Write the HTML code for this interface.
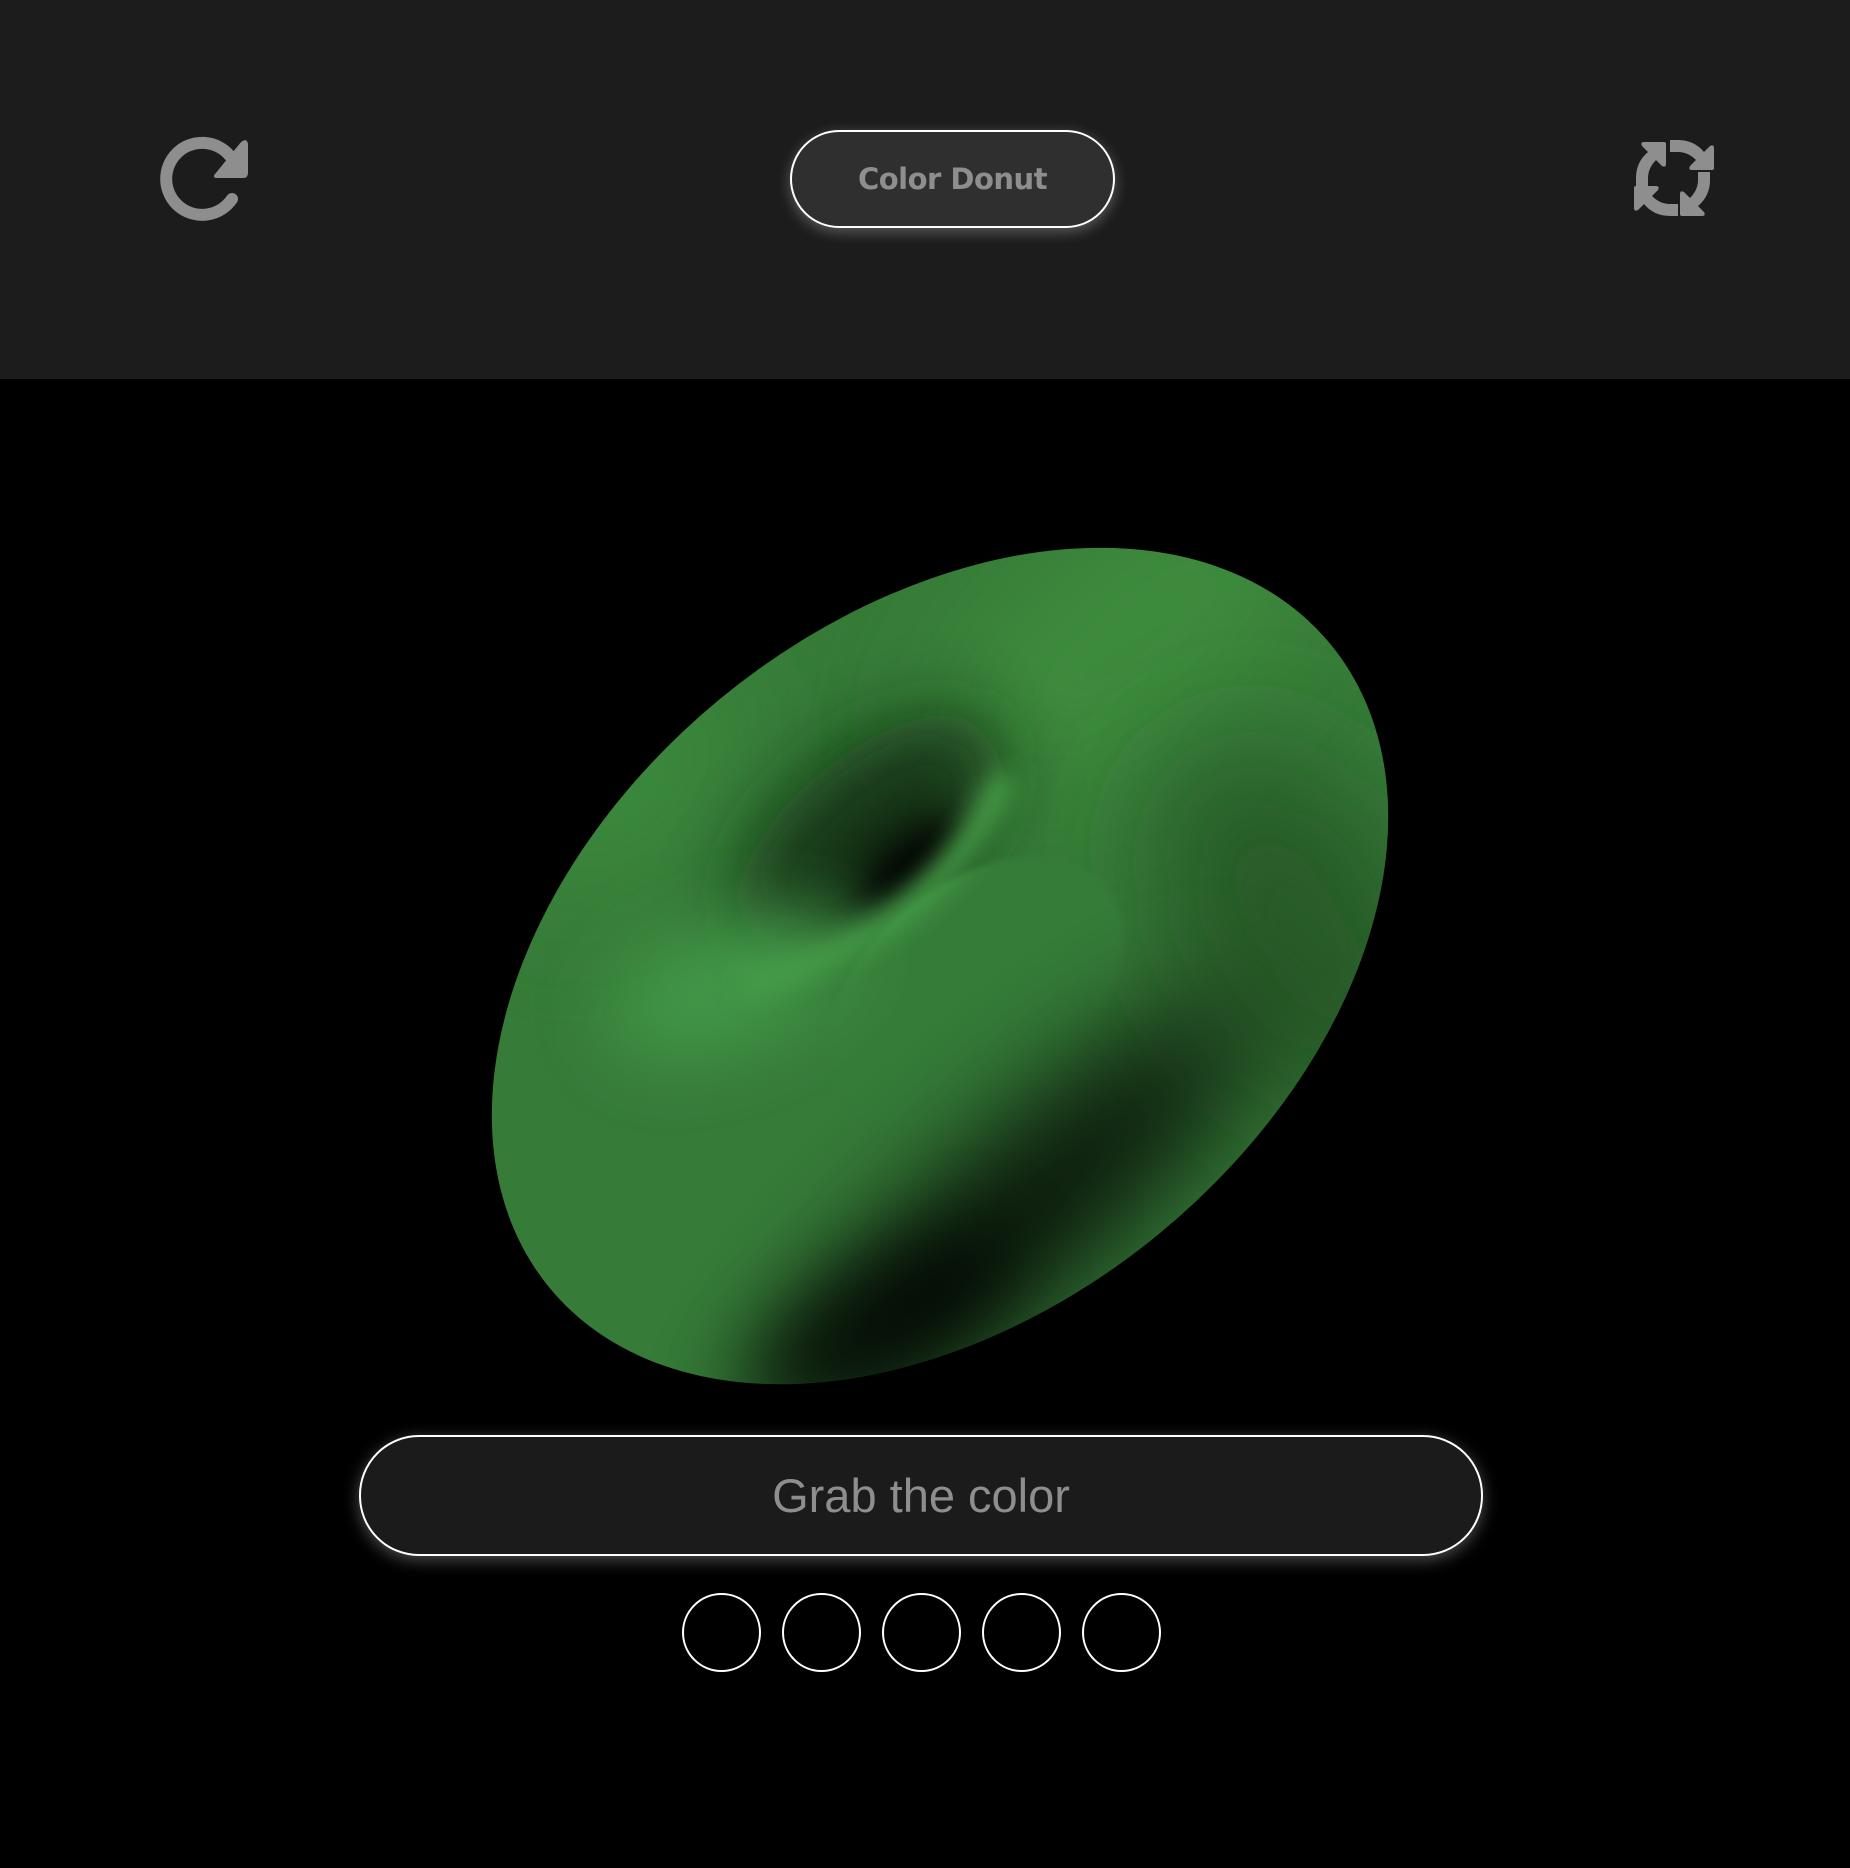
<!DOCTYPE html>
<html><head><meta charset="utf-8"><style>
html,body{margin:0;padding:0;background:#000;width:1850px;height:1868px;overflow:hidden;font-family:"Liberation Sans",sans-serif}
.hdr{position:absolute;left:0;top:0;width:1850px;height:379px;background:#1c1c1c}
.pill{position:absolute;left:790px;top:130px;width:321px;height:94px;border:2px solid #fff;border-radius:49px;background:#2f2f2f;box-shadow:0 4px 14px rgba(255,255,255,0.28);color:#8e8e8e;font-family:"DejaVu Sans","Liberation Sans",sans-serif;font-weight:bold;font-size:29px;line-height:94px;text-align:center;letter-spacing:-0.5px}
.btn{position:absolute;left:359px;top:1435px;width:1120px;height:117px;border:2px solid #fff;border-radius:60px;background:#1b1b1b;box-shadow:0 4px 16px rgba(255,255,255,0.3);color:#8e8e8e;font-size:47px;line-height:117px;text-align:center}
.c{position:absolute;top:1593px;width:75px;height:75px;border:2px solid #fff;border-radius:50%}
</style></head><body>
<div class="hdr">
<svg style="position:absolute;left:150px;top:130px" width="110" height="100" viewBox="0 0 110 100">
<path d="M82 69 A36 36 0 1 1 80 26" fill="none" stroke="#8e8e8e" stroke-width="12" stroke-linecap="round"/>
<path d="M66 46 L93 46 Q96 46 96 43 L96 15 Q96 10 92 14 Z" fill="#8e8e8e" stroke="#8e8e8e" stroke-width="4" stroke-linejoin="round"/>
</svg>
<svg style="position:absolute;left:1630px;top:134px" width="86" height="86" viewBox="0 0 86 86">
<g fill="#8e8e8e">
<path d="M6 52 L6 44 Q6 28 18 18 L12 12 Q10 8 14 8 L34 8 Q36 8 36 10 L36 30 Q36 34 32 32 L26 26 Q18 34 18 44 L18 52 Z"/>
<path d="M46 6 L54 6 Q70 6 80 18 L86 12 Q90 10 90 14 L90 34 Q90 36 88 36 L68 36 Q64 36 66 32 L72 26 Q64 18 54 18 L46 18 Z" transform="translate(-6 0)"/>
<path d="M80 34 L80 42 Q80 58 68 68 L74 74 Q76 78 72 78 L52 78 Q50 78 50 76 L50 56 Q50 52 54 54 L60 60 Q68 52 68 42 L68 34 Z" transform="translate(0 4)"/>
<path d="M40 82 L32 82 Q16 82 6 70 L0 76 Q-4 78 -4 74 L-4 54 Q-4 52 -2 52 L18 52 Q22 52 20 56 L14 62 Q22 70 32 70 L40 70 Z" transform="translate(8 0)"/>
</g></svg>
<div class="pill">Color Donut</div>
</div>
<svg style="position:absolute;left:0;top:379px" width="1850" height="1060" viewBox="0 379 1850 1060">
<defs>
<clipPath id="cp"><ellipse cx="940" cy="966" rx="506" ry="346" transform="rotate(-39.5 940 966)"/></clipPath>
<filter id="b60" filterUnits="userSpaceOnUse" x="0" y="300" width="1850" height="1300"><feGaussianBlur stdDeviation="60"/></filter>
<filter id="b40" filterUnits="userSpaceOnUse" x="0" y="300" width="1850" height="1300"><feGaussianBlur stdDeviation="38"/></filter>
<filter id="b20" filterUnits="userSpaceOnUse" x="0" y="300" width="1850" height="1300"><feGaussianBlur stdDeviation="20"/></filter>
<filter id="b12" filterUnits="userSpaceOnUse" x="0" y="300" width="1850" height="1300"><feGaussianBlur stdDeviation="12"/></filter>
<filter id="b3" filterUnits="userSpaceOnUse" x="0" y="300" width="1850" height="1300"><feGaussianBlur stdDeviation="3"/></filter>
</defs>
<g clip-path="url(#cp)">
<rect x="400" y="450" width="1050" height="1000" fill="#367b38"/>
<ellipse cx="1130" cy="640" rx="230" ry="110" transform="rotate(-40 1130 640)" fill="#3d8b3e" filter="url(#b60)"/>
<ellipse cx="620" cy="780" rx="140" ry="80" transform="rotate(-45 620 780)" fill="#3a8a3c" filter="url(#b60)"/>
<ellipse cx="1300" cy="930" rx="120" ry="200" transform="rotate(-30 1300 930)" fill="#255a28" filter="url(#b60)"/>
<ellipse cx="870" cy="835" rx="160" ry="80" transform="rotate(-40 870 835)" fill="#0b200c" opacity="0.8" filter="url(#b40)"/>
<ellipse cx="910" cy="865" rx="70" ry="28" transform="rotate(-40 910 865)" fill="#000" filter="url(#b20)"/>
<g filter="url(#b3)">
<ellipse cx="975" cy="995" rx="170" ry="110" transform="rotate(-40 975 995)" fill="#367b38"/>
</g>
<ellipse cx="730" cy="985" rx="130" ry="60" transform="rotate(-20 730 985)" fill="#42974a" filter="url(#b40)"/>
<path d="M752 982 Q931 938 1002 785" fill="none" stroke="#459b47" stroke-width="26" stroke-linecap="round" filter="url(#b12)"/>
<ellipse cx="1010" cy="1225" rx="320" ry="70" transform="rotate(-42 1010 1225)" fill="#000" opacity="0.95" filter="url(#b60)"/>
<ellipse cx="880" cy="1320" rx="150" ry="55" transform="rotate(-30 880 1320)" fill="#000" opacity="0.7" filter="url(#b40)"/>
</g>
</svg>
<div class="btn">Grab the color</div>
<div class="c" style="left:682px"></div>
<div class="c" style="left:782px"></div>
<div class="c" style="left:882px"></div>
<div class="c" style="left:982px"></div>
<div class="c" style="left:1082px"></div>
</body></html>
